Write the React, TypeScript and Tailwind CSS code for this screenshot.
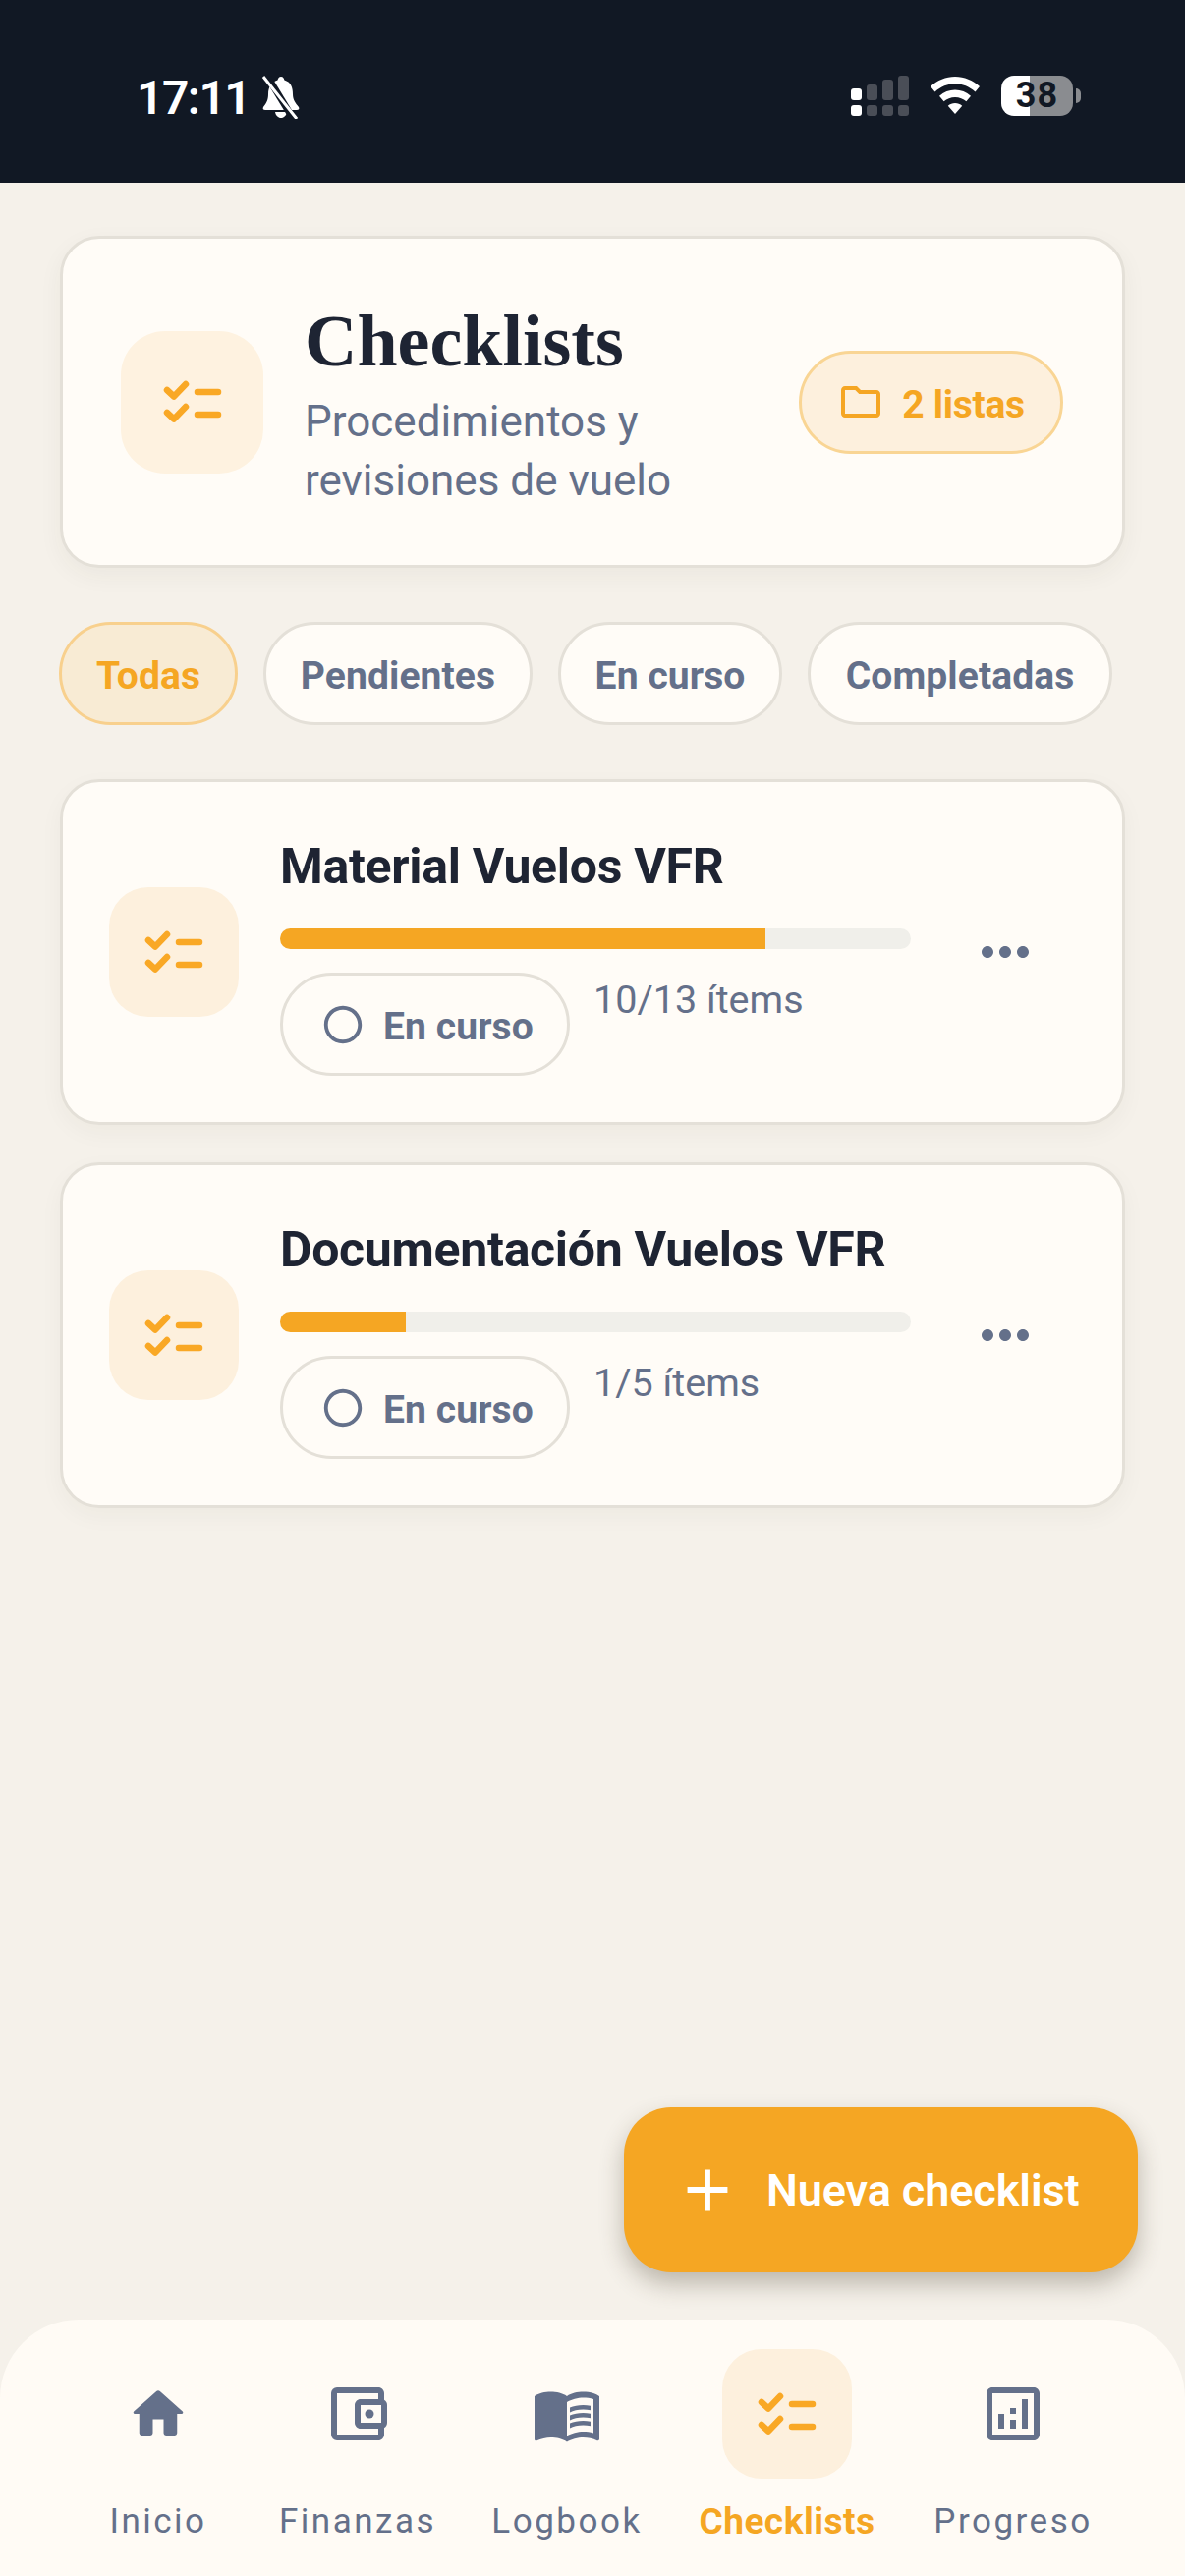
import { MdAdd, MdMenuBook, MdMoreHoriz, MdOutlineAccountBalanceWallet, MdOutlineAnalytics, MdOutlineFolder, MdRadioButtonUnchecked } from "react-icons/md";

function ChecklistIcon({ className }: { className?: string }) {
  return (
    <svg viewBox="0 0 60 44" fill="none" stroke="#F9A825" strokeWidth="6.5" strokeLinecap="round" strokeLinejoin="round" className={className}>
      <path d="M4 10l7 6.500L23 4" />
      <path d="M4 33l7 6.500L23 27" />
      <path d="M35 12h21" />
      <path d="M35 35h21" />
    </svg>
  );
}

function HomeIcon() {
  return (
    <svg viewBox="0 0 24 24" fill="#64708A" className="h-[66px] w-[66px]">
      <path d="M10 19v-5h4v5c0 .55.45 1 1 1h3c.55 0 1-.45 1-1v-7h1.700c.46 0 .68-.57.33-.87L12.670 3.600c-.38-.34-.96-.34-1.340 0l-8.360 7.530c-.34.3-.13.87.33.87H5v7c0 .55.45 1 1 1h3c.55 0 1-.45 1-1z" />
    </svg>
  );
}

function StatusBar() {
  return (
    <div className="flex h-[186px] shrink-0 items-start justify-between bg-[#111824] pl-[139px] pr-[106px] pt-[77px] text-white">
      <div className="flex items-center gap-[12px]">
        <span className="text-[48px] font-semibold leading-[43px] tracking-[-1.500px]">17:11</span>
        <svg viewBox="0 0 40 44" className="h-[44px] w-[40px]">
          <path d="M20 1c2 0 3 1.500 3.400 3.600C30 6.500 32 12 32 19c0 6 3 9 6 13 1 1.800 0 3-2 3H4c-2 0-3-1.200-2-3 3-4 5-7 5-13 0-7 3-12.400 9.500-14.400C17 2.500 18 1 20 1z" fill="#fff" />
          <path d="M14 37h12c-.6 3.600-3 6-6 6s-5.400-2.400-6-6z" fill="#fff" />
          <path d="M5 -1L33 45" stroke="#111824" strokeWidth="7" />
          <path d="M2 1L36 44" stroke="#fff" strokeWidth="3" />
        </svg>
      </div>
      <div className="flex items-start">
        <div className="mr-[22px] flex flex-col gap-[5px]">
          <div className="flex items-end gap-[5px]">
            <div className="h-[12px] w-[11px] rounded-[3px] bg-white" />
            <div className="h-[16px] w-[11px] rounded-[3px] bg-[#4A4E57]" />
            <div className="h-[21px] w-[11px] rounded-[3px] bg-[#4A4E57]" />
            <div className="h-[25px] w-[11px] rounded-[3px] bg-[#4A4E57]" />
          </div>
          <div className="flex gap-[5px]">
            <div className="h-[11px] w-[11px] rounded-[3px] bg-white" />
            <div className="h-[11px] w-[11px] rounded-[3px] bg-[#4A4E57]" />
            <div className="h-[11px] w-[11px] rounded-[3px] bg-[#4A4E57]" />
            <div className="h-[11px] w-[11px] rounded-[3px] bg-[#4A4E57]" />
          </div>
        </div>
        <svg viewBox="0 0 50 38" className="mr-[22px] mt-[1px] h-[38px] w-[50px]" fill="#fff">
          <path d="M25 0c9.500 0 18 3.700 25 10l-4.500 5.500C39.500 10 32.500 7.200 25 7.200S10.500 10 4.500 15.500L0 10C7 3.700 15.500 0 25 0z" />
          <path d="M25 13.500c6 0 11.400 2.200 16 6.200l-4.600 5.600c-3-2.700-7-4.300-11.400-4.300s-8.400 1.600-11.400 4.300L9 19.700c4.600-4 10-6.200 16-6.200z" />
          <path d="M25 27c2.700 0 5.200 1 7.200 2.700L25 38l-7.200-8.300C19.800 28 22.300 27 25 27z" />
        </svg>
        <div className="relative flex h-[41px] w-[73px] overflow-hidden rounded-[13px]">
          <div className="w-[29px] bg-white" />
          <div className="flex-1 bg-[#8A8C90]" />
          <span className="absolute inset-0 text-center text-[36px] font-bold leading-[41px] tracking-[1px] text-[#111824]">38</span>
        </div>
        <div className="ml-[3px] mt-[13px] h-[15px] w-[5px] rounded-r-full bg-[#8A8C90]" />
      </div>
    </div>
  );
}

function Chip({ label, width, active }: { label: string; width: string; active?: boolean }) {
  return (
    <div
      className={`flex h-[105px] items-center justify-center rounded-full border-[3px] pt-[6px] text-[39px] font-bold tracking-[0.100px] ${width} ${
        active ? "border-[#F8D08D] bg-[#F8EBD4] text-[#F5A623]" : "border-[#E4E0D8] bg-[#FFFCF7] text-[#64708A]"
      }`}
    >
      {label}
    </div>
  );
}

function ListCard({ title, pct, items }: { title: string; pct: number; items: string }) {
  return (
    <div className="flex items-center rounded-[40px] border-[3px] border-[#E4E0D8] bg-[#FFFCF7] py-[47px] pl-[47px] shadow-[0_8px_24px_rgba(60,50,30,0.04)]">
      <div className="flex h-[132px] w-[132px] shrink-0 items-center justify-center rounded-[40px] bg-[#FDF0DD]">
        <ChecklistIcon className="h-[44px] w-[60px]" />
      </div>
      <div className="ml-[42px] w-[642px] shrink-0">
        <div className="whitespace-nowrap pt-[2px] text-[50px] font-bold leading-[74px] tracking-[-0.300px] text-[#1E2433]">{title}</div>
        <div className="mt-[26px] h-[21px] overflow-hidden rounded-full bg-[#F0EFEA]">
          <div className="h-full bg-[#F5A623]" style={{ width: `${pct}%` }} />
        </div>
        <div className="mt-[24px] flex items-start gap-[24px]">
          <div className="flex h-[105px] w-[295px] items-center gap-[18px] rounded-full border-[3px] border-[#E4E0D8] pl-[38px] text-[39px] font-bold tracking-[0.100px] text-[#64708A]">
            <MdRadioButtonUnchecked className="h-[46px] w-[46px] shrink-0" />
            <span className="pt-[5px]">En curso</span>
          </div>
          <div className="text-[39.500px] leading-[56px] text-[#64708A]">{items}</div>
        </div>
      </div>
      <MdMoreHoriz className="ml-[60px] h-[72px] w-[72px] shrink-0 text-[#64708A]" />
    </div>
  );
}

function NavItem({ label, width, icon, active }: { label: string; width: string; icon: React.ReactNode; active?: boolean }) {
  return (
    <div className={`flex flex-col items-center ${width}`}>
      <div className={`flex h-[132px] w-[132px] items-center justify-center rounded-[40px] ${active ? "bg-[#FDF0DD]" : ""}`}>{icon}</div>
      <div
        className={`mt-[23px] whitespace-nowrap leading-[42px] ${
          active ? "text-[37px] font-bold tracking-[0.500px] text-[#F5A623]" : "text-[35px] font-normal tracking-[2.500px] text-[#64708A]"
        }`}
      >
        {label}
      </div>
    </div>
  );
}

export default function App() {
  return (
    <div className="flex h-[2622px] w-[1206px] flex-col overflow-hidden bg-[#F5F1EA] font-['Roboto',sans-serif]">
      <StatusBar />

      <main className="relative flex-1 px-[61px] pt-[54px]">
        {/* Header */}
        <div className="flex h-[338px] items-center rounded-[40px] border-[3px] border-[#E4E0D8] bg-[#FFFCF7] pl-[59px] pr-[60px] shadow-[0_8px_24px_rgba(60,50,30,0.05)]">
          <div className="flex h-[145px] w-[145px] shrink-0 items-center justify-center rounded-[45px] bg-[#FEF2E0]">
            <ChecklistIcon className="h-[44px] w-[60px]" />
          </div>
          <div className="ml-[42px] flex-1 pt-[6px]">
            <h1 className="mb-[10px] font-['Liberation_Serif',serif] text-[74px] font-bold leading-[84px] text-[#1E2433]">Checklists</h1>
            <p className="text-[44px] leading-[60px] text-[#64708A]">
              Procedimientos y
              <br />
              revisiones de vuelo
            </p>
          </div>
          <div className="flex h-[105px] w-[269px] shrink-0 items-center justify-center gap-[18px] rounded-full border-[3px] border-[#F9D594] bg-[#FDF0DD] text-[39px] font-bold tracking-[-0.300px] text-[#F5A623]">
            <MdOutlineFolder className="h-[48px] w-[48px] shrink-0" />
            <span className="pt-[6px]">2 listas</span>
          </div>
        </div>

        {/* Filters */}
        <div className="-ml-[1px] mt-[55px] flex gap-[26px]">
          <Chip label="Todas" width="w-[182px]" active />
          <Chip label="Pendientes" width="w-[274px]" />
          <Chip label="En curso" width="w-[228px]" />
          <Chip label="Completadas" width="w-[310px]" />
        </div>

        {/* Lists */}
        <div className="mt-[55px] flex flex-col gap-[38px]">
          <ListCard title="Material Vuelos VFR" pct={77} items="10/13 ítems" />
          <ListCard title="Documentación Vuelos VFR" pct={20} items="1/5 ítems" />
        </div>

        {/* FAB */}
        <div className="absolute bottom-[48px] right-[48px] flex h-[168px] w-[523px] items-center gap-[25px] rounded-[48px] bg-[#F5A623] pl-[50px] text-[45px] font-semibold tracking-[-0.100px] text-white shadow-[0_12px_24px_rgba(60,50,30,0.3)]">
          <MdAdd className="h-[70px] w-[70px] shrink-0" />
          <span className="pt-[2px]">Nueva checklist</span>
        </div>
      </main>

      {/* Bottom nav */}
      <nav className="flex h-[261px] shrink-0 rounded-t-[80px] bg-[#FFFBF5] pl-[61px] pt-[30px]">
        <NavItem label="Inicio" width="w-[200px]" icon={<HomeIcon />} />
        <NavItem label="Finanzas" width="w-[206px]" icon={<MdOutlineAccountBalanceWallet className="h-[72px] w-[72px] text-[#64708A]" />} />
        <NavItem label="Logbook" width="w-[220px]" icon={<MdMenuBook className="h-[72px] w-[72px] text-[#64708A]" />} />
        <NavItem label="Checklists" width="w-[228px]" icon={<ChecklistIcon className="h-[44px] w-[60px]" />} active />
        <NavItem label="Progreso" width="w-[232px]" icon={<MdOutlineAnalytics className="h-[72px] w-[72px] text-[#64708A]" />} />
      </nav>
    </div>
  );
}
